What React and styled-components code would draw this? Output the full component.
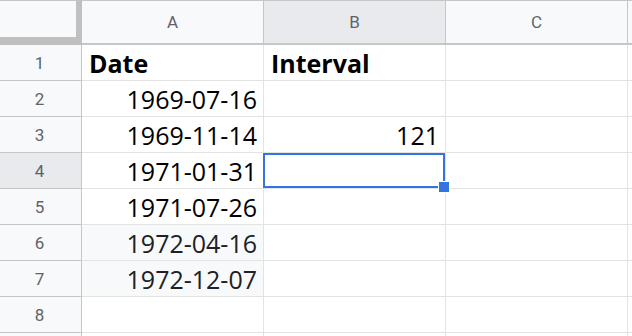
import React from "react";
import styled, { createGlobalStyle, css } from "styled-components";

const Global = createGlobalStyle`
  html, body { margin: 0; padding: 0; background: #fff; overflow: hidden; }
  * { box-sizing: border-box; }
`;

const Sheet = styled.div`
  display: grid;
  grid-template-columns: 82px 182px 182px 182px 1fr;
  grid-template-rows: 45px;
  grid-auto-rows: 36px;
  width: 632px;
  height: 336px;
  overflow: hidden;
  background: #fff;
`;

const Corner = styled.div`
  background: #f8f9fa;
  border-top: 1px solid #c4c7c5;
  border-right: 6px solid #c0c0c0;
  border-bottom: 8px solid #c0c0c0;
`;

const ColHead = styled.div`
  display: flex;
  align-items: center;
  justify-content: center;
  background: ${(p) => (p.$active ? "#e8eaed" : "#f8f9fa")};
  border-top: 1px solid #c4c7c5;
  border-right: 1px solid #c4c7c5;
  border-bottom: 2px solid #c4c7c5;
  font-family: Roboto, "Liberation Sans", sans-serif;
  font-size: 17px;
  color: #5f6368;
  padding-bottom: 1px;
`;

const RowHead = styled.div`
  display: flex;
  align-items: center;
  justify-content: center;
  background: ${(p) => (p.$active ? "#e8eaed" : "#f8f9fa")};
  border-right: 1px solid #c4c7c5;
  border-bottom: 1px solid #c4c7c5;
  font-family: Roboto, "Liberation Sans", sans-serif;
  font-size: 17px;
  color: #5f6368;
  padding-right: 2px;
`;

const Cell = styled.div`
  position: relative;
  display: flex;
  align-items: center;
  justify-content: ${(p) => (p.$right ? "flex-end" : "flex-start")};
  padding: 1px 6px 0 7px;
  background: ${(p) => (p.$shade ? "#f8f9fa" : "#fff")};
  border-right: 1px solid #e2e3e3;
  border-bottom: 1px solid #e2e3e3;
  font-family: "Open Sans", "Noto Sans", sans-serif;
  font-size: 25px;
  line-height: 34px;
  font-weight: ${(p) => (p.$bold ? 700 : 400)};
  color: ${(p) => (p.$shade ? "#202124" : "#000")};
  white-space: nowrap;
  ${(p) =>
    p.$selected &&
    css`
      &::after {
        content: "";
        position: absolute;
        top: 0;
        left: -1px;
        right: 0;
        bottom: 0;
        border: 2px solid #3474e0;
        pointer-events: none;
      }
    `}
`;

const Handle = styled.span`
  position: absolute;
  right: -5px;
  bottom: -5px;
  width: 12px;
  height: 12px;
  background: #3474e0;
  border: 1px solid #fff;
  z-index: 2;
`;

const rows = [
  { a: "Date", b: "Interval", bold: true },
  { a: "1969-07-16", b: "" },
  { a: "1969-11-14", b: "121" },
  { a: "1971-01-31", b: "", selected: true },
  { a: "1971-07-26", b: "" },
  { a: "1972-04-16", b: "", shade: true },
  { a: "1972-12-07", b: "", shade: true },
  { a: "", b: "" },
  { a: "", b: "", hideNum: true },
];

export default function App() {
  return (
    <>
      <Global />
      <Sheet>
        <Corner />
        <ColHead>A</ColHead>
        <ColHead $active>B</ColHead>
        <ColHead>C</ColHead>
        <ColHead />
        {rows.map((r, i) => (
          <React.Fragment key={i}>
            <RowHead $active={r.selected}>{r.hideNum ? "" : i + 1}</RowHead>
            <Cell $bold={r.bold} $right={!r.bold} $shade={r.shade}>
              {r.a}
            </Cell>
            <Cell $bold={r.bold} $right={!r.bold} $selected={r.selected}>
              {r.b}
              {r.selected && <Handle />}
            </Cell>
            <Cell />
            <Cell />
          </React.Fragment>
        ))}
      </Sheet>
    </>
  );
}
